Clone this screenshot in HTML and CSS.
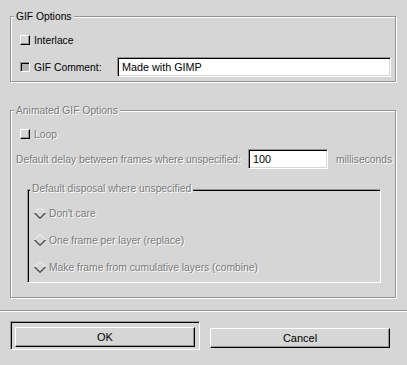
FILE: index.html
```html
<!DOCTYPE html>
<html lang="en">
<head>
    <meta charset="UTF-8">
    <title>Save as GIF</title>
    <link rel="stylesheet" href="styles.css">
</head>
<body>
    <div class="dialog">
        <!-- Options -->
        <div class="vbox">
            <div class="frame">
                <div class="frame-title">GIF Options</div>
                <div class="frame-body gif-body">
                    <div class="row">
                        <span class="check"></span>
                        <span class="label">Interlace</span>
                    </div>
                    <div class="row">
                        <span class="check checked"></span>
                        <span class="label">GIF Comment:</span>
                        <div class="entry comment-entry">Made with GIMP</div>
                    </div>
                </div>
            </div>

            <div class="frame insensitive">
                <div class="frame-title">Animated GIF Options</div>
                <div class="frame-body anim-body">
                    <div class="row loop-row">
                        <span class="check"></span>
                        <span class="label">Loop</span>
                    </div>
                    <div class="row">
                        <span class="label delay-label">Default delay between frames where unspecified:</span>
                        <div class="entry delay-entry">100</div>
                        <span class="label">milliseconds</span>
                    </div>
                    <div class="subframe">
                        <div class="frame-title sub-title">Default disposal where unspecified</div>
                        <div class="subframe-body">
                            <div class="row radio-row">
                                <svg class="radio" width="12" height="12" viewBox="0 0 12 12">
                                    <path d="M0.5 6 L6 0.5 L11.5 6" fill="none" stroke="#fff"/>
                                    <path d="M1.5 6 L6 1.5 L10.5 6" fill="none" stroke="#d6d6d6"/>
                                    <path d="M1.5 6 L6 10.5 L10.5 6" fill="none" stroke="#969696"/>
                                    <path d="M0.5 6 L6 11.5 L11.5 6" fill="none" stroke="#000"/>
                                </svg>
                                <span class="label">Don't care</span>
                            </div>
                            <div class="row radio-row">
                                <svg class="radio" width="12" height="12" viewBox="0 0 12 12">
                                    <path d="M0.5 6 L6 0.5 L11.5 6" fill="none" stroke="#fff"/>
                                    <path d="M1.5 6 L6 1.5 L10.5 6" fill="none" stroke="#d6d6d6"/>
                                    <path d="M1.5 6 L6 10.5 L10.5 6" fill="none" stroke="#969696"/>
                                    <path d="M0.5 6 L6 11.5 L11.5 6" fill="none" stroke="#000"/>
                                </svg>
                                <span class="label">One frame per layer (replace)</span>
                            </div>
                            <div class="row radio-row">
                                <svg class="radio" width="12" height="12" viewBox="0 0 12 12">
                                    <path d="M0.5 6 L6 0.5 L11.5 6" fill="none" stroke="#fff"/>
                                    <path d="M1.5 6 L6 1.5 L10.5 6" fill="none" stroke="#d6d6d6"/>
                                    <path d="M1.5 6 L6 10.5 L10.5 6" fill="none" stroke="#969696"/>
                                    <path d="M0.5 6 L6 11.5 L11.5 6" fill="none" stroke="#000"/>
                                </svg>
                                <span class="label">Make frame from cumulative layers (combine)</span>
                            </div>
                        </div>
                    </div>
                </div>
            </div>
        </div>

        <div class="separator"></div>

        <!-- Buttons -->
        <div class="action-area">
            <div class="default-frame">
                <button class="btn" type="button">OK</button>
            </div>
            <button class="btn cancel-btn" type="button">Cancel</button>
        </div>
    </div>
</body>
</html>
```

FILE: styles.css
```css
:root {
    --bg: #d6d6d6;        /* gtk grey */
    --dark: #969696;      /* shadow dark */
    --light: #ffffff;     /* shadow light */
    --text: #000;
    --text-off: #7a7a7a;  /* insensitive text */
    --font: "Liberation Sans", Arial, Helvetica, sans-serif;
}

* {
    box-sizing: border-box;
    margin: 0;
    padding: 0;
}

body {
    background: var(--bg);
    color: var(--text);
    font-family: var(--font);
    font-size: 10.3px;
    line-height: 13px;
    width: 407px;
    height: 365px;
    overflow: hidden;
}

.vbox {
    display: flex;
    flex-direction: column;
    gap: 28px;
    padding: 16px 11px 0 10px;
}

/* Etched frame */
.frame {
    border: 1px solid var(--dark);
    box-shadow: inset 1px 1px 0 var(--light), 1px 1px 0 var(--light);
}

.frame-title {
    width: fit-content;
    margin: -7px 0 0 3px;
    padding: 0 2px;
    background: var(--bg);
    height: 13px;
    white-space: nowrap;
}

.frame-body {
    display: flex;
    flex-direction: column;
}

.gif-body {
    padding: 7px 4px 4px 9px;
    gap: 7px;
}

.anim-body {
    padding: 7px 4px 14px 5px;
    gap: 5px;
}

.row {
    display: flex;
    align-items: center;
    height: 20px;
}

.loop-row {
    padding-left: 4px;
}

.label {
    white-space: nowrap;
    flex-shrink: 0;
}

.insensitive .label,
.insensitive .frame-title {
    color: var(--text-off);
    text-shadow: 1px 1px 0 var(--light);
}

/* Check buttons */
.check {
    width: 10px;
    height: 10px;
    margin-right: 4px;
    border: 1px solid;
    border-color: var(--light) #000 #000 var(--light);
    box-shadow: inset -1px -1px 0 var(--dark);
    flex-shrink: 0;
}

.check.checked {
    border-color: var(--dark) var(--light) var(--light) var(--dark);
    box-shadow: inset 1px 1px 0 #000;
    background: #b4b4b4;
}

/* Text entries */
.entry {
    height: 20px;
    background: #fff;
    border: 1px solid;
    border-color: var(--dark) var(--light) var(--light) var(--dark);
    box-shadow: inset 1px 1px 0 #000, inset -1px -1px 0 var(--bg);
    padding: 3px 3px 0 4px;
    color: var(--text);
    white-space: nowrap;
    font-size: 10.8px;
    flex-shrink: 0;
}

.comment-entry {
    width: 274px;
    margin-left: auto;
}

.delay-label {
    width: 232px;
}

.delay-entry {
    width: 80px;
    margin-right: 8px;
}

/* Disposal sub-frame */
.subframe {
    margin: 15px 10px 0 11px;
    border: 1px solid;
    border-color: var(--dark) var(--light) var(--light) var(--dark);
    box-shadow: inset 1px 1px 0 #000, inset -1px -1px 0 var(--bg);
}

.sub-title {
    margin: -8px 0 0 2px;
}

.subframe-body {
    display: flex;
    flex-direction: column;
    gap: 7px;
    padding: 8px 0 5px 0;
}

.radio {
    margin: 0 3px 0 6px;
    flex-shrink: 0;
}

/* Separator */
.separator {
    margin-top: 12px;
    height: 2px;
    border-top: 1px solid var(--dark);
    border-bottom: 1px solid var(--light);
}

/* Action area */
.action-area {
    display: flex;
    align-items: flex-start;
    padding: 9px 0 0 10px;
}

.default-frame {
    padding: 5px 4px 2px 4px;
    border: 1px solid;
    border-color: var(--dark) var(--light) var(--light) var(--dark);
    box-shadow: inset 1px 1px 0 #000, inset -1px -1px 0 var(--bg);
}

.btn {
    display: block;
    width: 180px;
    height: 20px;
    background: var(--bg);
    border: 1px solid;
    border-color: var(--light) #000 #000 var(--light);
    box-shadow: inset -1px -1px 0 var(--dark);
    font-family: var(--font);
    font-size: 11px;
    color: var(--text);
    line-height: 13px;
}

.cancel-btn {
    margin: 7px 0 0 10px;
}
```
